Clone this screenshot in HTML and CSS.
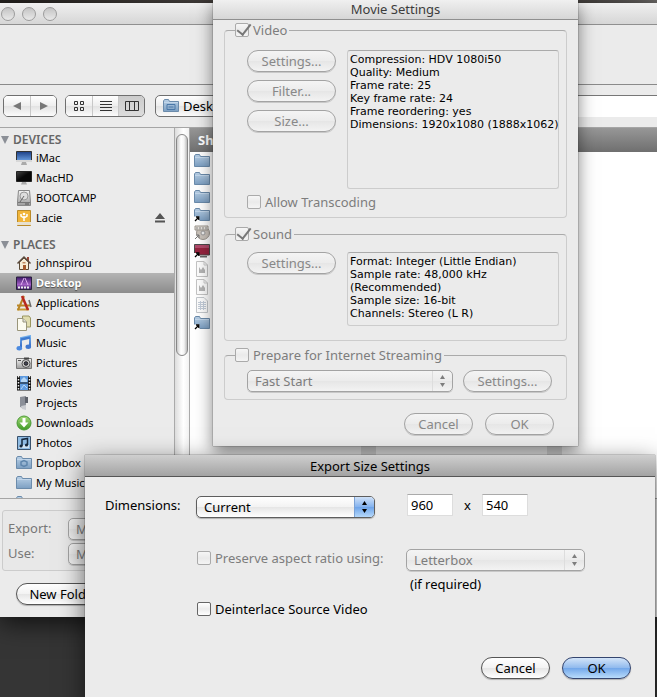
FILE: index.html
```html
<!DOCTYPE html>
<html lang="en">
<head>
<meta charset="utf-8">
<title>Movie Settings</title>
<link rel="stylesheet" href="styles.css">
</head>
<body>
<svg class="defs" aria-hidden="true">
  <defs>
    <linearGradient id="gBlue" x1="0" y1="0" x2="0" y2="1"><stop offset="0" stop-color="#b9d0e6"/><stop offset="1" stop-color="#7c9fc2"/></linearGradient>
    <linearGradient id="gScreen" x1="0" y1="0" x2="0" y2="1"><stop offset="0" stop-color="#1b3f86"/><stop offset="1" stop-color="#6fa4e6"/></linearGradient>
    <linearGradient id="gBlack" x1="0" y1="0" x2="1" y2="1"><stop offset="0" stop-color="#444"/><stop offset="0.5" stop-color="#080808"/></linearGradient>
    <linearGradient id="gPurple" x1="0" y1="0" x2="0" y2="1"><stop offset="0" stop-color="#3b1668"/><stop offset="0.6" stop-color="#a25fc4"/><stop offset="1" stop-color="#3a1c66"/></linearGradient>
    <linearGradient id="gMetal" x1="0" y1="0" x2="0" y2="1"><stop offset="0" stop-color="#f4f4f4"/><stop offset="1" stop-color="#9c9c9c"/></linearGradient>
    <linearGradient id="gGreen" x1="0" y1="0" x2="0" y2="1"><stop offset="0" stop-color="#a5d97a"/><stop offset="1" stop-color="#3d9a25"/></linearGradient>
    <linearGradient id="gNote" x1="0" y1="0" x2="0" y2="1"><stop offset="0" stop-color="#75b3ee"/><stop offset="1" stop-color="#2e62c0"/></linearGradient>
  </defs>
  <symbol id="folder" viewBox="0 0 16 16"><path d="M.5 3V13.500H15.500V3.500H6.500L5.500 1.500H1.500Z" fill="url(#gBlue)" stroke="#6b8bab"/><path d="M1 4.500H15" stroke="#c2d6ea"/></symbol>
  <symbol id="alias" viewBox="0 0 16 16"><use href="#folder"/><path d="M0 9.500H5.500V15H0Z" fill="#fff"/><path d="M1 14L4 11M2 10H4.800V13" stroke="#000" stroke-width="1.300" fill="none"/></symbol>
  <symbol id="page" viewBox="0 0 16 16"><path d="M2.500 .5H10L13.500 4V15.500H2.500Z" fill="#fdfdfd" stroke="#c4c4c4"/><path d="M10 .5V4H13.500" fill="none" stroke="#ccc"/><path d="M5 6L7 9L9 6L11 9V12H5Z" fill="#b4b4b4"/></symbol>
  <symbol id="sheet" viewBox="0 0 16 16"><path d="M2.500 .5H10L13.500 4V15.500H2.500Z" fill="#fdfdfd" stroke="#c4c8cc"/><path d="M4 5.500H12M4 7.500H12M4 9.500H12M4 11.500H12M6.500 4V13M9.500 4V13" stroke="#c3ccd8"/></symbol>
  <symbol id="updown" viewBox="0 0 8 14"><path d="M4 1L6.500 5H1.500ZM4 13L6.500 9H1.500Z" fill="currentColor"/></symbol>
</svg>

<main class="desktop">
  <section class="window browser" aria-label="Save dialog">
    <header class="titlebar lights"><i></i><i></i><i></i></header>
    <div class="blank"></div>
    <div class="toolbar">
      <div class="segments">
        <button type="button" aria-label="Back"><svg width="10" height="10" viewBox="0 0 10 10"><path d="M9 1V9L1 5Z" fill="#777"/></svg></button>
        <button type="button" aria-label="Forward"><svg width="10" height="10" viewBox="0 0 10 10"><path d="M1 1V9L9 5Z" fill="#777"/></svg></button>
      </div>
      <div class="segments">
        <button type="button" aria-label="Icon view"><svg width="12" height="12" viewBox="0 0 12 12"><path d="M1.500 1.500h3v3h-3zM7.500 1.500h3v3h-3zM1.500 7.500h3v3h-3zM7.500 7.500h3v3h-3z" fill="none" stroke="#333"/></svg></button>
        <button type="button" aria-label="List view"><svg width="12" height="12" viewBox="0 0 12 12"><path d="M0 1.500H12M0 4.500H12M0 7.500H12M0 10.500H12" stroke="#333"/></svg></button>
        <button type="button" class="on" aria-label="Column view"><svg width="14" height="12" viewBox="0 0 14 12"><path d="M.5 1.500H13.500V10.500H.5ZM4.500 1.500V10.500M9.500 1.500V10.500" fill="none" stroke="#333"/></svg></button>
      </div>
      <button type="button" class="location"><svg width="16" height="16" viewBox="0 0 16 16"><use href="#folder"/><path d="M4 6.500H12V11.500H4Z" fill="none" stroke="#4b78a8"/><path d="M5.500 9H10.500" stroke="#4b78a8"/></svg>Desktop</button>
      <input class="search" type="search" aria-label="Search">
    </div>

    <div class="panes">
      <nav class="sidebar">
        <h2><svg width="8" height="8" viewBox="0 0 8 8"><path d="M0 0H8L4 8Z" fill="#8b8f96"/></svg>DEVICES</h2>
        <ul>
          <li><svg viewBox="0 0 16 16"><path d="M.5 1.500H15.500V11.500H.5Z" fill="url(#gScreen)" stroke="#333"/><path d="M0 10H16V12H0Z" fill="#d8d8d8"/><path d="M6 12H10L11 15H5Z" fill="#aaa"/></svg>iMac</li>
          <li><svg viewBox="0 0 16 16"><path d="M.5 1.500H15.500V11.500H.5Z" fill="url(#gBlack)" stroke="#222"/><path d="M6 12H10L11 14.500H5Z" fill="#aaa"/></svg>MacHD</li>
          <li><svg viewBox="0 0 16 16"><path d="M2.500 .5H13.500L14.500 12V15.500H1.500V12Z" fill="url(#gMetal)" stroke="#888"/><circle cx="8" cy="6" r="4" fill="#ddd" stroke="#999"/><path d="M8 6L4 12" stroke="#666"/><path d="M2 12.500H14" stroke="#777"/><path d="M9 14H13" stroke="#555"/></svg>BOOTCAMP</li>
          <li><svg viewBox="0 0 16 16"><path d="M1.500 .5H14.500V15.500H1.500Z" fill="#f1b53a" stroke="#b98a2a"/><path d="M1 12H15V15H1Z" fill="#e6e0d0"/><path d="M8 11V6M8 8L5 6V4M8 8L11 6V4" stroke="#fff" stroke-width="1.500" fill="none"/><circle cx="8" cy="4" r="1.300" fill="#fff"/></svg>Lacie
            <button type="button" class="eject" aria-label="Eject"><svg viewBox="0 0 12 12"><path d="M6 1L11 7H1ZM1 8.500H11V10.500H1Z" fill="#555"/></svg></button></li>
        </ul>
        <h2><svg width="8" height="8" viewBox="0 0 8 8"><path d="M0 0H8L4 8Z" fill="#8b8f96"/></svg>PLACES</h2>
        <ul>
          <li><svg viewBox="0 0 16 16"><path d="M3.500 7V14.500H12.500V7L8 3Z" fill="#f6eed6" stroke="#5a4a36"/><path d="M11 2H13V6H11Z" fill="#9a4434"/><path d="M1.500 8.500L8 2L14.500 8.500" fill="none" stroke="#5b4a3c" stroke-width="1.500"/><path d="M7 10H10V15H7Z" fill="#a45a2c"/><path d="M6.500 7H9.500V8.500H6.500Z" fill="#c08a60"/></svg>johnspirou</li>
          <li class="selected"><svg viewBox="0 0 16 16"><path d="M.5 2H15.500V14.500H.5Z" fill="url(#gPurple)" stroke="#28203c"/><path d="M8 3L5 10M9 3L12 10" stroke="#e0b0f0"/><path d="M2 12.500H14" stroke="#eee" stroke-width="2" stroke-dasharray="2 1"/></svg>Desktop</li>
          <li><svg viewBox="0 0 16 16"><path d="M1 14.500H13" stroke="#c79a36" stroke-width="2"/><path d="M8 1L2 15M1 10.500H14" stroke="#b98626" stroke-width="2" fill="none"/><path d="M6 1L12 15" stroke="#b8291f" stroke-width="2.500"/><path d="M13 5L15 12" stroke="#6b6b6b" stroke-width="1.500"/></svg>Applications</li>
          <li><svg viewBox="0 0 16 16"><path d="M6.500 1H13L14.500 3V12H6.500Z" fill="#e0dcae" stroke="#9a9660"/><path d="M1.500 3.500H7L10.500 7V15.500H1.500Z" fill="#fcfbf0" stroke="#99957a"/><path d="M7 3.500V7H10.500" fill="#ddd" stroke="#99957a"/></svg>Documents</li>
          <li><svg viewBox="0 0 16 16"><path d="M5 13V3L14 1V11.500" fill="none" stroke="url(#gNote)" stroke-width="2"/><path d="M5 4.500L14 2.500" stroke="#3f7bd0" stroke-width="2.500"/><ellipse cx="3.300" cy="13.300" rx="2.800" ry="2.200" fill="#4b8ae0"/><ellipse cx="12.300" cy="11.700" rx="2.800" ry="2.200" fill="#3f78d0"/></svg>Music</li>
          <li><svg viewBox="0 0 16 16"><path d="M.5 3.500H15.500V13.500H.5Z" fill="url(#gMetal)" stroke="#777"/><path d="M2 5.500H5" stroke="#555"/><path d="M8 3.500H13" stroke="#444" stroke-width="2"/><circle cx="10" cy="8.500" r="4" fill="#ccc" stroke="#555"/><circle cx="10" cy="8.500" r="1.800" fill="#445" stroke="#222"/></svg>Pictures</li>
          <li><svg viewBox="0 0 16 16"><path d="M1 1H15V15.500H1Z" fill="#111"/><path d="M4 1H12V7.500H4ZM4 8.500H12V15H4Z" fill="#5f9be0"/><path d="M5 5L8 2L11 5V7H5Z" fill="#b6d7f5"/><path d="M5 14L8 10L11 13" stroke="#b6d7f5" fill="none"/><path d="M2.500 1V15M13.500 1V15" stroke="#eee" stroke-width="1.500" stroke-dasharray="1.500 1.500"/></svg>Movies</li>
          <li><svg viewBox="0 0 16 16"><path d="M4 2L10 1V14L4 12Z" fill="#8b8f98"/><path d="M9 2H12V8H9Z" fill="#5e626b"/><path d="M5 11L10 10V15L6 14Z" fill="#c9cbd0"/></svg>Projects</li>
          <li><svg viewBox="0 0 16 16"><circle cx="8" cy="8" r="7" fill="url(#gGreen)" stroke="#4b9a36"/><path d="M6.500 3H9.500V7.500H12.500L8 12.500L3.500 7.500H6.500Z" fill="#fff"/></svg>Downloads</li>
          <li><svg viewBox="0 0 16 16"><path d="M1.500 1.500H14.500V14.500H1.500Z" fill="#8fbce4" stroke="#38516c"/><path d="M3 10H13V13H3Z" fill="#cfe3f3"/><path d="M6 11V4.500L11.500 3.500V10" fill="none" stroke="#16283c" stroke-width="1.500"/><circle cx="5" cy="11" r="1.600" fill="#16283c"/><circle cx="10.500" cy="10" r="1.600" fill="#16283c"/></svg>Photos</li>
          <li><svg viewBox="0 0 16 16"><use href="#folder"/><path d="M5 7L8 5.500L11 7V10L8 11.500L5 10Z" fill="none" stroke="#5f86ad" stroke-width="1.500"/></svg>Dropbox</li>
          <li><svg viewBox="0 0 16 16"><use href="#folder"/></svg>My Music</li>
          <li><svg viewBox="0 0 16 16"><use href="#folder"/></svg></li>
        </ul>
      </nav>
      <div class="scroll"><div class="thumb"></div></div>
      <div class="files">
        <div class="head">Shared</div>
        <div class="columns">
          <ul class="column">
            <li><svg viewBox="0 0 16 16"><use href="#folder"/></svg></li>
            <li><svg viewBox="0 0 16 16"><use href="#folder"/></svg></li>
            <li><svg viewBox="0 0 16 16"><use href="#folder"/></svg></li>
            <li><svg viewBox="0 0 16 16"><use href="#alias"/></svg></li>
            <li><svg viewBox="0 0 16 16"><circle cx="9" cy="8" r="6.500" fill="#c9c2ba" stroke="#9c958e"/><circle cx="9" cy="8" r="2" fill="#eee" stroke="#999"/><path d="M1 1H14V5H1Z" fill="#e6e2dc" stroke="#9a948c"/><path d="M3 2V4.500M6 2V4.500M9 2V4.500M12 2V4.500" stroke="#888"/><path d="M1 14L5 10M2 10H5V13" stroke="#777" fill="none"/></svg></li>
            <li><svg viewBox="0 0 16 16"><path d="M.5 1.500H15.500V12H.5Z" fill="#96243f" stroke="#4a4a4a"/><path d="M1 2H15V5H1Z" fill="#b04a6a"/><path d="M6 13H13V14.500H6Z" fill="#666"/><path d="M0 10H5V15H0Z" fill="#fff"/><path d="M1 14L4 11M2 10H4.800V13" stroke="#000" stroke-width="1.300" fill="none"/></svg></li>
            <li><svg viewBox="0 0 16 16"><use href="#page"/></svg></li>
            <li><svg viewBox="0 0 16 16"><use href="#page"/></svg></li>
            <li><svg viewBox="0 0 16 16"><use href="#sheet"/></svg></li>
            <li><svg viewBox="0 0 16 16"><use href="#alias"/></svg></li>
          </ul>
          <div class="column"></div>
          <div class="rest"></div>
        </div>
      </div>
    </div>

    <footer class="options">
      <div class="group">
        <label for="export">Export:</label>
        <span class="popup dim"><select id="export" disabled><option>Movie to QuickTime Movie</option></select><svg><use href="#updown"/></svg></span>
        <label for="use">Use:</label>
        <span class="popup dim"><select id="use" disabled><option>Most Recent Settings</option></select><svg><use href="#updown"/></svg></span>
      </div>
      <button type="button" class="pill">New Folder</button>
    </footer>
  </section>

  <section class="window movie" aria-labelledby="movie-title">
    <header class="titlebar"><h1 id="movie-title">Movie Settings</h1></header>
    <form class="settings">
      <fieldset>
        <legend><label class="check dim"><input type="checkbox" checked disabled>Video</label></legend>
        <div class="row">
          <div class="stack">
            <button type="button" class="pill" disabled>Settings...</button>
            <button type="button" class="pill" disabled>Filter...</button>
            <button type="button" class="pill" disabled>Size...</button>
          </div>
          <p class="info tall">Compression: HDV 1080i50<br>Quality: Medium<br>Frame rate: 25<br>Key frame rate: 24<br>Frame reordering: yes<br>Dimensions: 1920x1080 (1888x1062)</p>
        </div>
        <label class="check dim transcode"><input type="checkbox" disabled>Allow Transcoding</label>
      </fieldset>
      <fieldset>
        <legend><label class="check dim"><input type="checkbox" checked disabled>Sound</label></legend>
        <div class="row sound">
          <div class="stack"><button type="button" class="pill" disabled>Settings...</button></div>
          <p class="info">Format: Integer (Little Endian)<br>Sample rate: 48,000 kHz<br>(Recommended)<br>Sample size: 16-bit<br>Channels: Stereo (L R)</p>
        </div>
      </fieldset>
      <fieldset class="streaming">
        <legend><label class="check dim"><input type="checkbox" disabled>Prepare for Internet Streaming</label></legend>
        <div class="row stream">
          <span class="popup dim"><select aria-label="Streaming" disabled><option>Fast Start</option></select><svg><use href="#updown"/></svg></span>
          <button type="button" class="pill" disabled>Settings...</button>
        </div>
      </fieldset>
      <div class="actions">
        <button type="button" class="pill" disabled>Cancel</button>
        <button type="button" class="pill" disabled>OK</button>
      </div>
    </form>
  </section>

  <section class="window export" aria-labelledby="export-title">
    <header class="titlebar active"><h1 id="export-title">Export Size Settings</h1></header>
    <form class="size-form">
      <div class="fields">
        <label for="dimensions">Dimensions:</label>
        <span class="popup blue"><select id="dimensions"><option>Current</option></select><svg><use href="#updown"/></svg></span>
        <span class="size"><input type="text" value="960" aria-label="Width"><span>x</span><input type="text" value="540" aria-label="Height"></span>
        <label class="check dim second"><input type="checkbox" disabled>Preserve aspect ratio using:</label>
        <span class="popup dim"><select aria-label="Aspect ratio method" disabled><option>Letterbox</option></select><svg><use href="#updown"/></svg></span>
        <span class="note">(if required)</span>
        <label class="check second"><input type="checkbox">Deinterlace Source Video</label>
      </div>
      <div class="actions">
        <button type="button" class="pill">Cancel</button>
        <button type="submit" class="pill default">OK</button>
      </div>
    </form>
  </section>
</main>
</body>
</html>
```
FILE: styles.css
```css
* { box-sizing: border-box; }

body {
  margin: 0;
  font: 13px/18px "Lucida Grande", "Noto Sans", "Open Sans", sans-serif;
  color: #000;
}

h1, h2, p, ul, fieldset { margin: 0; padding: 0; font: inherit; }
ul { list-style: none; }
button, input, select { font: inherit; color: inherit; }
.defs { position: absolute; width: 0; height: 0; }

.desktop {
  position: relative;
  height: 100vh;
  overflow: hidden;
  background: linear-gradient(90deg, #25221f, #4a4542 30%, #3b2d29 45%, #4f4b48 90%, #6b6866) top / 100% 3px no-repeat, #353535;
}

.window { position: absolute; background: #ebebeb; }

.titlebar {
  display: flex;
  align-items: center;
  justify-content: center;
  height: 22px;
  border-bottom: 1px solid #8f8f8f;
  background: linear-gradient(#f0f0f0, #d6d6d6);
}

/* Save dialog */
.browser {
  inset: 3px 0 80px;
  display: flex;
  flex-direction: column;
  box-shadow: 0 6px 24px rgba(0, 0, 0, 0.7);
}

.lights { justify-content: flex-start; gap: 7px; padding-left: 1px; }
.lights i {
  width: 14px;
  height: 14px;
  border: 1px solid #9c9c9c;
  border-radius: 50%;
  background: linear-gradient(#c4c4c4, #e9e9e9);
}

.blank { height: 60px; border-bottom: 1px solid #8a8a8a; }

.toolbar {
  display: flex;
  align-items: center;
  gap: 8px;
  height: 43px;
  padding-left: 3px;
  border-bottom: 1px solid #a5a5a5;
}

.segments {
  display: flex;
  height: 22px;
  border: 1px solid #6f6f6f;
  border-radius: 5px;
  overflow: hidden;
}
.segments button {
  display: flex;
  align-items: center;
  justify-content: center;
  width: 26px;
  padding: 0;
  border: 0;
  background: linear-gradient(#fff, #eee 50%, #e3e3e3 51%, #fbfbfb);
}
.segments button + button { border-left: 1px solid #c8c8c8; }
.segments .on { background: linear-gradient(#ccc, #dcdcdc); }

.location {
  display: flex;
  align-items: center;
  gap: 4px;
  width: 190px;
  height: 22px;
  margin-left: 2px;
  padding: 0 7px;
  border: 1px solid #6f6f6f;
  border-radius: 5px;
  background: linear-gradient(#fff, #eee 50%, #e3e3e3 51%, #fbfbfb);
}
.search {
  flex: 1;
  min-width: 0;
  height: 22px;
  border: solid #777;
  border-width: 1px 0 0;
  background: #fff;
}

.panes { display: flex; flex: 1; min-height: 0; overflow: hidden; }

.sidebar { width: 174px; overflow: hidden; font-size: 11px; color: #000; }
.sidebar h2 {
  display: flex;
  align-items: center;
  gap: 4px;
  height: 20px;
  margin-top: 2px;
  padding-left: 1px;
  font-size: 12px;
  font-weight: 600;
  color: #666;
}
.sidebar ul + h2 { margin-top: 7px; }
.sidebar li {
  display: flex;
  align-items: center;
  gap: 4px;
  height: 20px;
  padding: 0 8px 0 16px;
}
.sidebar h2 + ul { margin-top: -2px; }
.sidebar li svg { flex: none; width: 16px; height: 16px; }
.sidebar .selected {
  color: #fff;
  font-weight: 700;
  background: linear-gradient(#b4b4b4, #8c8c8c);
  text-shadow: 0 1px 1px rgba(0, 0, 0, 0.5);
}
.eject { margin-left: auto; padding: 0; border: 0; background: none; display: flex; }
.sidebar .eject svg { width: 12px; height: 12px; }

.scroll {
  width: 16px;
  padding: 6px 1px;
  border: solid #aaa;
  border-width: 0 1px;
  background: linear-gradient(90deg, #ddd, #fff 60%, #f2f2f2);
}
.thumb {
  height: 222px;
  border: 1px solid #888;
  border-radius: 7px;
  background: linear-gradient(90deg, #ccc, #fff 40%, #f4f4f4 70%, #bbb);
}

.files { display: flex; flex: 1; flex-direction: column; min-width: 0; background: #fff; }
.head {
  height: 24px;
  padding: 3px 8px;
  color: #fff;
  font-weight: 700;
  background: linear-gradient(#979797, #6f6f6f);
}
.columns { display: flex; flex: 1; min-height: 0; }
.column { width: 186px; border-right: 15px solid #e4e4e4; }
.column li { height: 18px; padding: 1px 4px; }
.column svg { display: block; width: 16px; height: 16px; }

.options { border-top: 1px solid #a5a5a5; padding: 11px 16px 12px 2px; }
.group {
  display: grid;
  grid-template-columns: 60px 1fr;
  gap: 3px 0;
  padding: 7px 5px 5px;
  border: 1px solid #ccc;
  border-radius: 3px;
  color: #777;
  background: #e8e8e8;
}
.group label { line-height: 20px; }
.options > .pill { display: block; width: 96px; margin: 12px 0 0 14px; }

/* Shared controls */
.pill {
  height: 22px;
  padding: 0;
  border: 1px solid #555;
  border-radius: 11px;
  line-height: 18px;
  background: linear-gradient(#fff, #f3f3f3 48%, #e6e6e6 52%, #fff);
  box-shadow: 0 1px 1px rgba(0, 0, 0, 0.25);
}
.pill:disabled {
  border-color: #a3a3a3;
  color: #888;
  background: linear-gradient(#f4f4f4, #ececec 48%, #e6e6e6 52%, #f3f3f3);
  box-shadow: 0 1px 0 rgba(0, 0, 0, 0.15);
}
.pill.default {
  border-color: #34456f;
  background: linear-gradient(#d3e4f8, #92bbee 48%, #74a8ea 52%, #b9dcfb);
}

.popup { position: relative; display: block; height: 22px; }
.popup select {
  appearance: none;
  display: block;
  width: 100%;
  height: 22px;
  padding: 0 24px 0 7px;
  border: 1px solid #5e5e5e;
  border-radius: 5px;
  background: linear-gradient(#fff, #f3f3f3 48%, #e6e6e6 52%, #fff);
  box-shadow: 0 1px 1px rgba(0, 0, 0, 0.25);
}
.popup svg {
  position: absolute;
  top: 1px;
  right: 1px;
  width: 20px;
  height: 20px;
  padding: 3px 5px;
  border-left: 1px solid #ddd;
  pointer-events: none;
}
.popup.dim { color: #7d7d7d; }
.popup.dim select {
  border-color: #a3a3a3;
  color: #7d7d7d;
  opacity: 1;
  background: linear-gradient(#f4f4f4, #ececec 48%, #e6e6e6 52%, #f3f3f3);
  box-shadow: 0 1px 0 rgba(0, 0, 0, 0.15);
}
.popup.blue svg {
  border-left-color: #7ba2d6;
  border-radius: 0 4px 4px 0;
  background: linear-gradient(#cfe1f8, #86b4ef 48%, #6fa5ea 52%, #b5d8fa);
}

.check { display: flex; align-items: center; gap: 4px; }
.check input {
  appearance: none;
  position: relative;
  flex: none;
  width: 14px;
  height: 14px;
  margin: 0;
  border: 1px solid #666;
  border-radius: 2px;
  background: linear-gradient(#fff, #ececec 50%, #fff);
}
.check.dim { color: #7d7d7d; }
.check.dim input { border-color: #aaa; background: linear-gradient(#f6f6f6, #eaeaea 50%, #f4f4f4); }
.check input:checked::after {
  content: "";
  position: absolute;
  left: 4px;
  top: -3px;
  width: 6px;
  height: 12px;
  border: solid #777;
  border-width: 0 2px 2px 0;
  transform: rotate(38deg);
}

.actions { display: flex; justify-content: flex-end; gap: 12px; }
.actions .pill { width: 69px; }

/* Movie settings sheet */
.movie {
  top: 0;
  left: 213px;
  right: 79px;
  box-shadow: 0 6px 16px rgba(0, 0, 0, 0.5), 0 0 1px #444;
}
.movie .titlebar { height: 20px; padding-bottom: 2px; color: #3c3c3c; }
.settings { padding: 1px 11px 11px; }
.settings fieldset {
  min-width: 0;
  padding: 11px 7px 8px 22px;
  border: 1px solid #ccc;
  border-top-color: #aaa;
  border-radius: 4px;
}
.settings fieldset + fieldset { margin-top: 7px; }
.settings .streaming { margin-top: 5px; padding-bottom: 7px; }
.settings legend { margin-left: -12px; padding: 0 2px 0 0; }
.row { display: flex; gap: 11px; }
.stack { display: flex; flex-direction: column; gap: 8px; width: 89px; }
.info {
  flex: 1;
  min-width: 0;
  min-height: 74px;
  padding: 2px;
  border: 1px solid #ccc;
  border-top-color: #aaa;
  border-radius: 3px;
  font: 11px/13px "Lucida Grande", "DejaVu Sans", sans-serif;
  white-space: nowrap;
}
.info.tall { min-height: 139px; }
.transcode { height: 14px; margin-top: 6px; }
.sound { padding-bottom: 6px; margin-top: -2px; }
.stream { gap: 10px; margin-top: -5px; padding-right: 7px; }
.stream .popup { flex: 1; }
.stream .pill { width: 89px; }
.settings .actions { margin-top: 13px; padding-right: 13px; }

/* Export size window */
.export {
  top: 455px;
  left: 85px;
  right: 2px;
  bottom: -8px;
  box-shadow: 0 8px 24px rgba(0, 0, 0, 0.6), 0 0 1px #333;
}
.active { background: linear-gradient(#cfcfcf, #a3a3a3); border-color: #555; }
.size-form { padding: 17px 24px 24px 20px; }
.fields {
  display: grid;
  grid-template-columns: 91px 210px 1fr;
  grid-template-rows: 26px 29px 22px 26px 24px;
  align-items: center;
}
.fields > :first-child, .fields .size { align-self: start; line-height: 22px; }
.fields .popup { width: 179px; }
.fields label, .note { grid-column: 1; }
.fields .second { grid-column: 2; padding-left: 1px; white-space: nowrap; }
.fields .dim.second, .fields .dim.popup { grid-row: 3; }
.fields .dim.second { align-self: start; }
.fields .dim.popup { grid-column: 3; }
.fields .note { grid-row: 4; grid-column: 3; padding-left: 4px; }
.fields .note ~ .second { grid-row: 5; }
.size { display: flex; align-items: center; padding-left: 1px; }
.size span { width: 29px; text-align: center; }
.size input {
  width: 46px;
  height: 22px;
  padding: 0 3px;
  border: 1px solid #ddd;
  border-top-color: #aaa;
  background: #fff;
}
.size-form .actions { margin-top: 36px; }
```
